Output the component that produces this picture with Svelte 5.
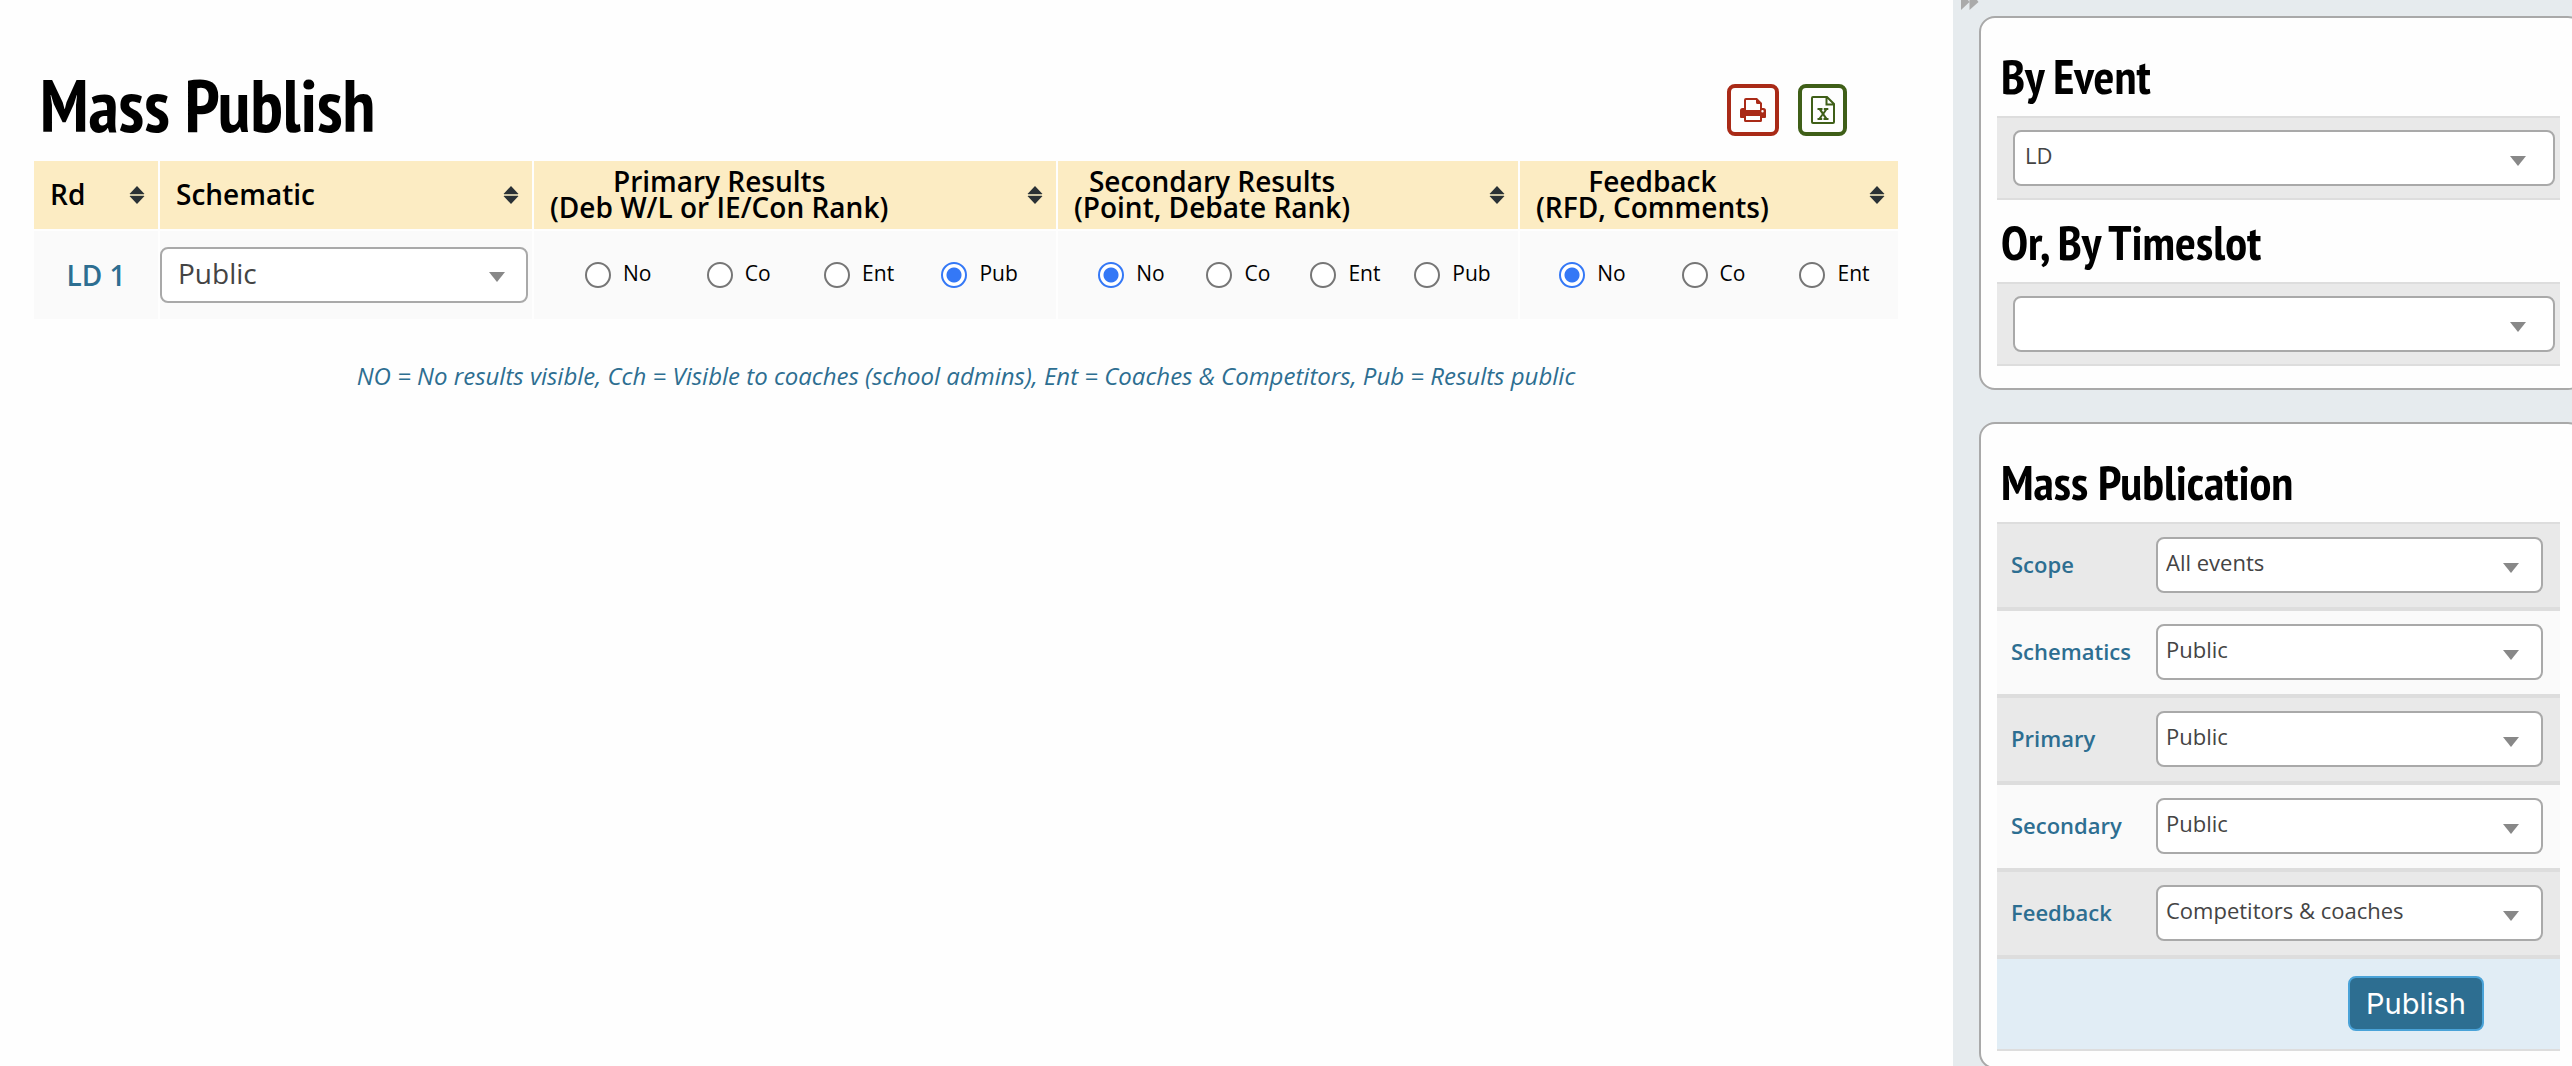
<script>
  const groups = [
    { id: 'primary', title: 'Primary Results', detail: '(Deb W/L or IE/Con Rank)', options: ['No', 'Co', 'Ent', 'Pub'] },
    { id: 'secondary', title: 'Secondary Results', detail: '(Point, Debate Rank)', options: ['No', 'Co', 'Ent', 'Pub'] },
    { id: 'feedback', title: 'Feedback', detail: '(RFD, Comments)', options: ['No', 'Co', 'Ent'] }
  ];
  let chosen = $state({ primary: 'Pub', secondary: 'No', feedback: 'No' });

  const levels = ['Public', 'Competitors & coaches', 'Coaches', 'Not published'];
  const fields = [
    { id: 'scope', label: 'Scope', options: ['All events', 'LD'] },
    { id: 'schematics', label: 'Schematics', options: levels },
    { id: 'primary-level', label: 'Primary', options: levels },
    { id: 'secondary-level', label: 'Secondary', options: levels },
    { id: 'feedback-level', label: 'Feedback', options: ['Competitors & coaches', 'Public', 'Coaches'] }
  ];
</script>

{#snippet picker(id, label, options)}
  <span class="picker">
    <select {id} aria-label={label}>
      {#each options as option}
        <option>{option}</option>
      {/each}
    </select>
    <svg class="caret" viewBox="0 0 16 10" aria-hidden="true"><path d="M0 0H16L8 10Z" /></svg>
  </span>
{/snippet}

{#snippet sorter()}
  <svg class="sorter" viewBox="0 0 16 18" aria-hidden="true">
    <path d="M8 0L15.500 8H0.500ZM0.500 10H15.500L8 18Z" />
    <path class="seam" d="M1 8H15V10H1Z" />
  </svg>
{/snippet}

<div class="page">
  <main>
    <header>
      <h1>Mass Publish</h1>
      <div class="tools">
        <button class="tool print" type="button" aria-label="Print">
          <svg viewBox="0 0 26 24" aria-hidden="true">
            <path fill-rule="evenodd" d="M6 0H17L22 5V10H23.500Q26 10 26 12.500V19Q26 20 25 20H22V22.500Q22 24 20.500 24H5.500Q4 24 4 22.500V20H1Q0 20 0 19V12.500Q0 10 2.500 10H4V2Q4 0 6 0ZM6 2V12H20V6H17.500Q16 6 16 4.500V2ZM6 18V22H20V18ZM22.500 12A1.200 1.200 0 1 0 22.500 14.400A1.200 1.200 0 1 0 22.500 12Z" />
          </svg>
        </button>
        <button class="tool sheet" type="button" aria-label="Export spreadsheet">
          <svg viewBox="0 0 24 28" aria-hidden="true">
            <path class="line" d="M1 2Q1 1 2 1H16L23 8V26Q23 27 22 27H2Q1 27 1 26ZM15.500 1V8.500H23" />
            <path d="M6.500 12H11.500V14H10.700L12.200 16.300L13.600 14H12.800V12H17.300V14H16L13.300 18L16.200 22H17.500V24H12.500V22H13.500L11.900 19.600L10.300 22H11.200V24H6.500V22H7.800L10.800 17.900L8 14H6.500Z" />
          </svg>
        </button>
      </div>
    </header>

    <table>
      <thead>
        <tr>
          <th class="rd"><div class="head"><span>Rd</span> {@render sorter()}</div></th>
          <th class="schematic"><div class="head"><span>Schematic</span> {@render sorter()}</div></th>
          {#each groups as group}
            <th class={group.id}>
              <div class="head"><span>{group.title}<br />{group.detail}</span> {@render sorter()}</div>
            </th>
          {/each}
        </tr>
      </thead>
      <tbody>
        <tr>
          <td class="round"><a href="#ld1">LD 1</a></td>
          <td class="level">{@render picker('round-schematic', 'Schematic', levels)}</td>
          {#each groups as group}
            <td>
              <div class="choices {group.id}-choices">
                {#each group.options as option}
                  <label>
                    <input type="radio" name={group.id} value={option} bind:group={chosen[group.id]} />
                    <span>{option}</span>
                  </label>
                {/each}
              </div>
            </td>
          {/each}
        </tr>
      </tbody>
    </table>

    <p class="legend">NO = No results visible, Cch = Visible to coaches (school admins), Ent = Coaches &amp; Competitors, Pub = Results public</p>
  </main>

  <aside>
    <button class="collapse" type="button" aria-label="Collapse sidebar">
      <svg viewBox="0 0 18 10" aria-hidden="true"><path d="M0 0H7L8.500 2L0 10ZM8.500 0H16L17.500 2L8.500 10Z" /></svg>
    </button>
    <section class="filters">
      <h2>By Event</h2>
      <div class="band">{@render picker('event', 'By Event', ['LD'])}</div>
      <h2>Or, By Timeslot</h2>
      <div class="band">{@render picker('timeslot', 'By Timeslot', [''])}</div>
    </section>
    <section class="bulk">
      <h2>Mass Publication</h2>
      {#each fields as field}
        <div class="field">
          <label for={field.id}>{field.label}</label>
          {@render picker(field.id, field.label, field.options)}
        </div>
      {/each}
      <div class="submit"><button type="button">Publish</button></div>
    </section>
  </aside>
</div>

<style>
  :global(body) {
    margin: 0;
    background: #fefefe;
  }
  * {
    box-sizing: border-box;
  }
  .page {
    display: flex;
    height: 100vh;
    overflow: hidden;
    color: #000;
    font-family: 'Open Sans', 'Noto Sans', sans-serif;
  }
  main {
    flex: 1;
    padding: 64px 55px 0 34px;
  }
  header {
    display: flex;
    justify-content: space-between;
    height: 97px;
    padding: 0 51px 0 6px;
  }
  h1,
  h2 {
    margin: 0;
    font-family: 'PT Sans Narrow', 'Liberation Sans Narrow', 'Open Sans Condensed', 'Liberation Sans', sans-serif;
    font-weight: 700;
  }
  h1 {
    font-size: 73px;
    line-height: 82px;
  }
  .tools {
    display: flex;
    gap: 19px;
    padding-top: 20px;
  }
  .tool {
    display: flex;
    align-items: center;
    justify-content: center;
    height: 52px;
    padding: 0;
    border: 4px solid;
    border-radius: 8px;
    background: #fefefe;
  }
  .tool svg {
    fill: currentColor;
  }
  .tool .line {
    fill: none;
    stroke: currentColor;
    stroke-width: 2;
  }
  .print {
    width: 52px;
    color: #a92a17;
  }
  .print svg {
    width: 26px;
  }
  .sheet {
    width: 49px;
    color: #3f5f18;
  }
  .sheet svg {
    width: 24px;
  }
  table {
    width: 100%;
    border-collapse: separate;
    border-spacing: 0;
    table-layout: fixed;
  }
  th,
  td {
    padding: 0;
    border-right: 2px solid #fefefe;
  }
  th:last-child,
  td:last-child {
    border-right: 0;
  }
  th {
    height: 70px;
    border-bottom: 2px solid #fefefe;
    background: #fcecc3;
    font-size: 28px;
    font-weight: 600;
    line-height: 26px;
  }
  .rd {
    width: 6.76%;
  }
  .schematic {
    width: 20.06%;
  }
  .primary {
    width: 28.11%;
  }
  .secondary {
    width: 24.79%;
  }
  .head {
    display: flex;
    align-items: center;
    justify-content: space-between;
    padding: 0 13px 0 16px;
  }
  .head span {
    padding-bottom: 2px;
  }
  .sorter {
    width: 16px;
    fill: #2a3135;
  }
  .seam {
    fill: #c9c2a3;
  }
  td {
    height: 88px;
    background: #fafafa;
  }
  .round {
    text-align: center;
  }
  .round a {
    color: #2d6e91;
    font-size: 28px;
    font-weight: 600;
    text-decoration: none;
  }
  .level {
    padding-right: 4px;
  }
  .picker {
    display: grid;
    align-items: center;
    width: 100%;
  }
  .picker select {
    grid-area: 1 / 1;
    width: 100%;
    height: 56px;
    padding: 0 60px 6px 10px;
    border: 2px solid #a9a9a9;
    border-radius: 8px;
    background: #fff;
    color: #444;
    font: 22px 'Open Sans', 'Noto Sans', sans-serif;
    appearance: none;
  }
  .caret {
    grid-area: 1 / 1;
    justify-self: end;
    width: 16px;
    margin: 6px 29px 0 0;
    fill: #888;
    pointer-events: none;
  }
  .level .picker select {
    padding-bottom: 4px;
    padding-left: 16px;
    font-size: 28px;
  }
  .level .caret {
    margin: 4px 23px 0 0;
  }
  .choices {
    display: grid;
    grid-template-columns: repeat(4, 1fr);
  }
  .primary-choices {
    padding: 0 16px 0 24px;
  }
  .secondary-choices {
    padding: 0 12px 0 20px;
  }
  .feedback-choices {
    grid-template-columns: repeat(3, 1fr);
    padding: 0 3px 0 12px;
  }
  .choices label {
    display: flex;
    align-items: center;
    justify-content: center;
    gap: 12px;
    font-size: 21px;
    line-height: 26px;
  }
  .choices span {
    padding-bottom: 4px;
  }
  input[type='radio'] {
    width: 26px;
    height: 26px;
    margin: 0;
    border: 2px solid #767676;
    border-radius: 50%;
    background: #fff;
    appearance: none;
  }
  input[type='radio']:checked {
    border-color: #3478f6;
    background: radial-gradient(circle, #3478f6 0 7px, #fff 8px);
  }
  .legend {
    margin: 39px 0 0;
    color: #2d6e91;
    font-size: 24px;
    font-style: italic;
    line-height: 36px;
    text-align: center;
  }
  aside {
    width: 619px;
    padding: 0 0 0 26px;
    background: #e6ebee;
  }
  .collapse {
    display: block;
    height: 16px;
    margin-left: -18px;
    padding: 0 0 6px;
    border: 0;
    background: none;
  }
  .collapse svg {
    display: block;
    width: 18px;
    fill: #aaa;
  }
  section {
    margin: 0 -12px 32px 0;
    padding: 16px 22px 22px 16px;
    border: 2px solid #a9a9a9;
    border-radius: 16px;
    background: #fefefe;
  }
  .bulk {
    padding-bottom: 16px;
  }
  h2 {
    padding: 13px 0 11px 4px;
    font-size: 49px;
    line-height: 58px;
  }
  .band {
    padding: 12px 5px 12px 16px;
    border: solid #ddd;
    border-width: 2px 0;
    background: #e9e9e9;
  }
  .field {
    display: flex;
    align-items: center;
    padding: 13px 17px 14px 14px;
    border-bottom: 4px solid #ddd;
    background: #fafafa;
  }
  .field:nth-child(even) {
    background: #e9e9e9;
  }
  h2 + .field {
    border-top: 2px solid #ddd;
  }
  .field label {
    flex: 0 0 145px;
    padding-bottom: 2px;
    color: #2d6e91;
    font-size: 22px;
    font-weight: 600;
  }
  .field .picker select {
    padding-left: 8px;
  }
  .field .caret {
    margin-right: 24px;
  }
  .submit {
    padding: 17px 76px 18px;
    border-bottom: 2px solid #ddd;
    background: #e1edf5;
    text-align: right;
  }
  .submit button {
    height: 55px;
    padding: 0 16px;
    border: 2px solid #4aa3d8;
    border-radius: 8px;
    background: #2d6e91;
    color: #fff;
    font: 29px Inter, 'Liberation Sans', sans-serif;
  }
</style>
